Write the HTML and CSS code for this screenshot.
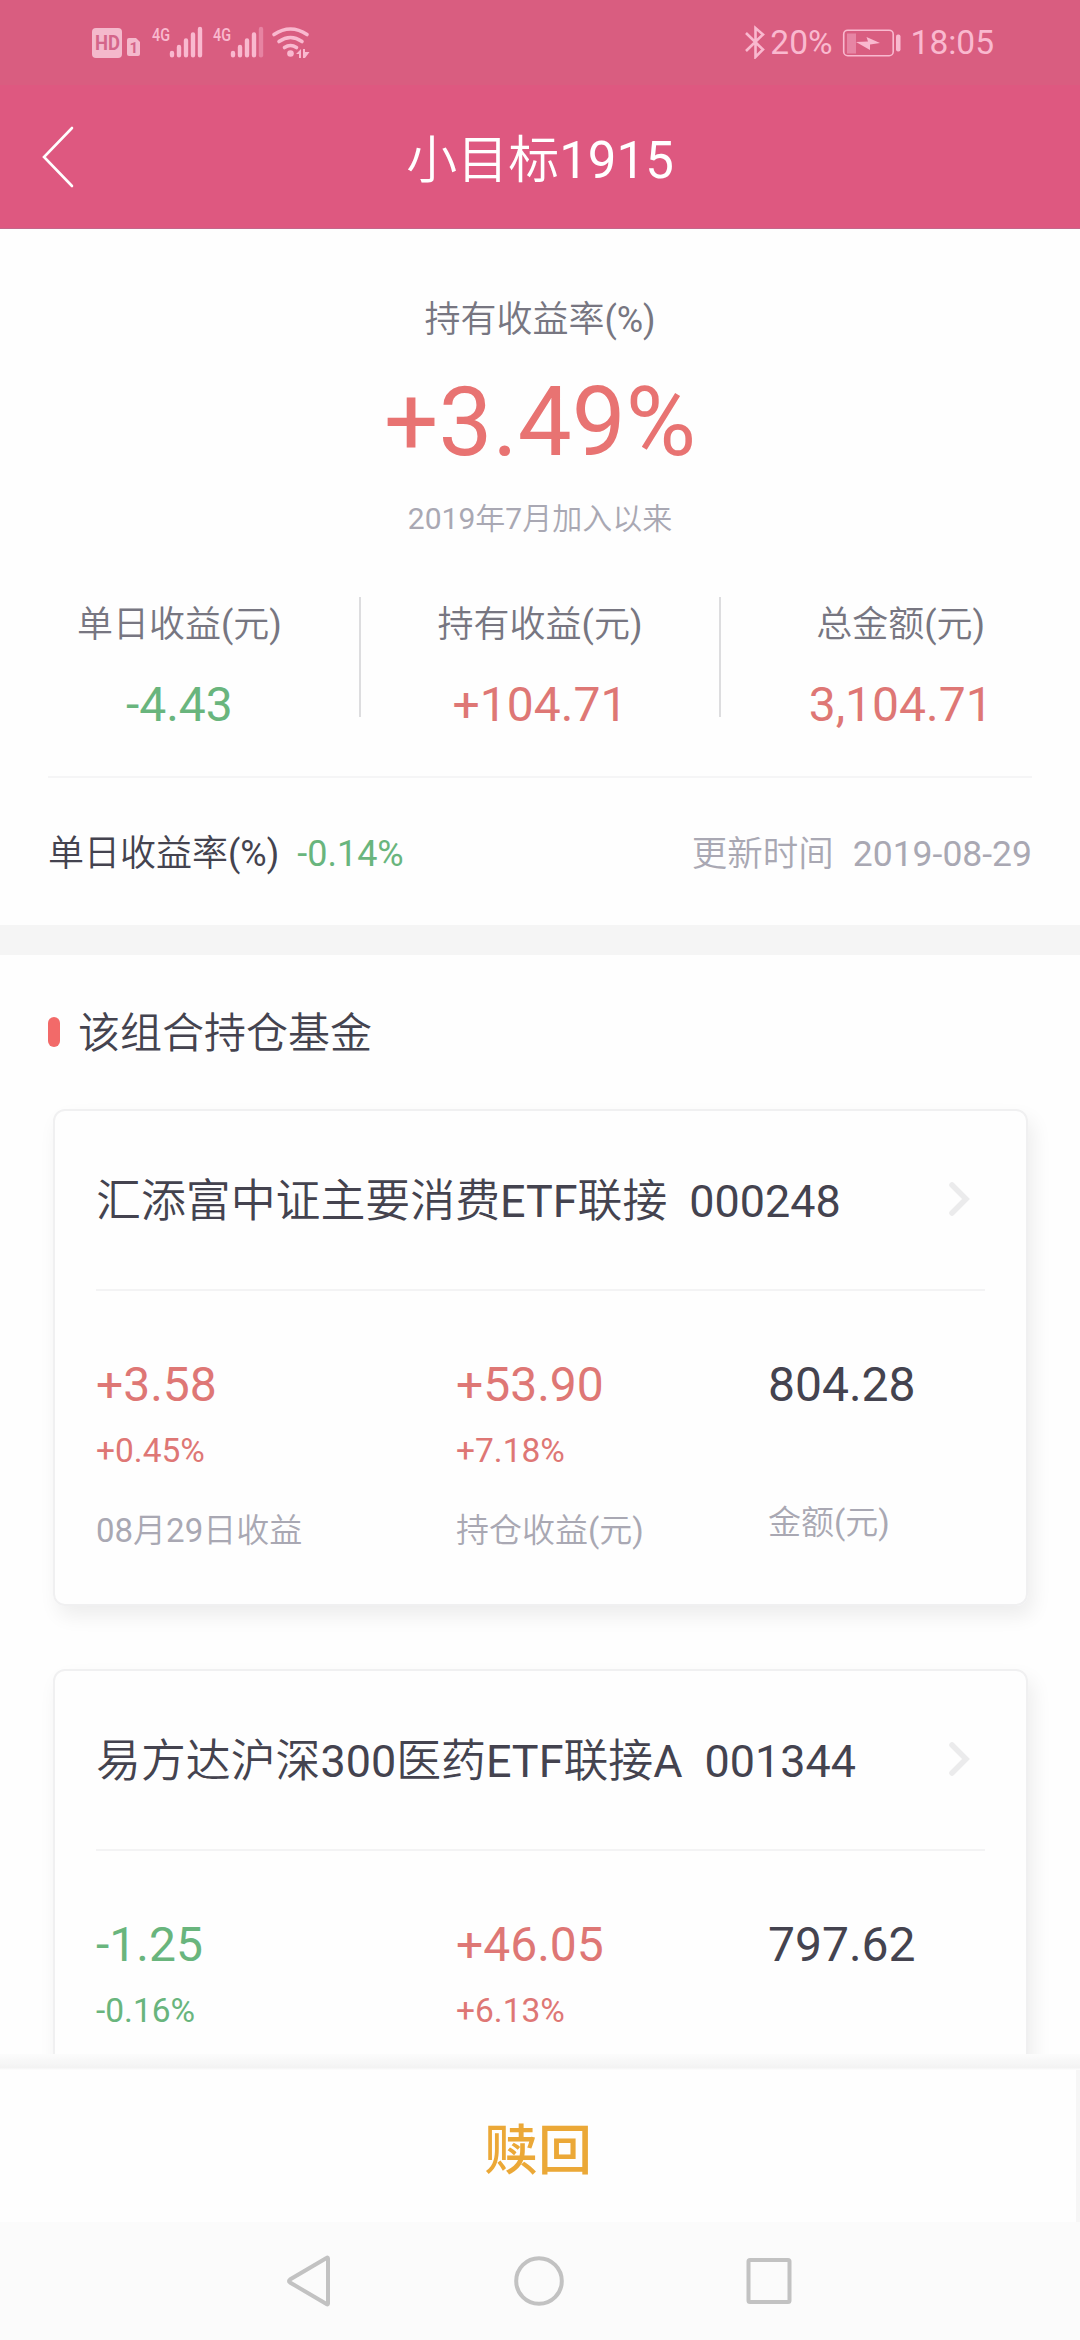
FILE: index.html
```
<!DOCTYPE html>
<html lang="zh-CN">
<head>
    <meta charset="UTF-8">
    <meta name="viewport" content="width=device-width, initial-scale=1.0">
    <title>小目标1915</title>
    <link rel="stylesheet" href="styles.css">
</head>
<body>
    <div class="status-bar">
        <svg class="status-left" width="220" height="40" viewBox="0 0 220 40">
            <!-- HD + sim -->
            <rect class="soft" x="2" y="8" width="30" height="30" rx="4"/>
            <text class="hd" x="5" y="30" textLength="25" lengthAdjust="spacingAndGlyphs">HD</text>
            <path class="soft" d="M39 18h7l4 4v12a2 2 0 0 1-2 2h-9a2 2 0 0 1-2-2V20a2 2 0 0 1 2-2z"/>
            <text class="sim" x="39.500" y="33" textLength="7">1</text>
            <!-- signal 1 -->
            <text class="net" x="62" y="20.500" textLength="18" lengthAdjust="spacingAndGlyphs">4G</text>
            <path class="bars" d="M82 33v2.200M89 27v8.200M96 20.500v14.700M103 14.500v20.700M110 9v26.200"/>
            <!-- signal 2 -->
            <text class="net" x="123" y="20.500" textLength="18" lengthAdjust="spacingAndGlyphs">4G</text>
            <path class="bars" d="M143 33v2.200M150 27v8.200M157 20.500v14.700M164 14.500v20.700"/>
            <path class="bars dim" d="M171 9v26.200"/>
            <!-- wifi -->
            <path class="wifi" d="M184 14.500q16.500-11 33 0M189 21.500q11.500-8 23 0M194.500 27.500q6-4 12 0"/>
            <circle class="fill" cx="200.500" cy="33.500" r="3.300"/>
            <path class="fill" d="M206 34l5-5v9h-2v-4zM213 29h2v3h4.500l-4.500 6h-2z"/>
        </svg>
        <div class="status-right">
            <svg class="bluetooth" width="22" height="34" viewBox="0 0 22 34">
                <path d="M2 8l17 16.500-7.500 7.500V3L19 9.500 2 26"/>
            </svg>
            <span class="percent">20%</span>
            <svg class="battery" width="60" height="30" viewBox="0 0 60 30">
                <rect class="shell" x="1.700" y="2.200" width="49.500" height="25.500" rx="4"/>
                <rect class="level" x="5" y="5.500" width="9" height="20"/>
                <path class="fill" d="M14 14l12-0.500L24.500 9 38 15l-10 1.500V22z"/>
                <rect class="fill" x="54" y="6.500" width="4.500" height="17" rx="2"/>
            </svg>
            <span>18:05</span>
        </div>
    </div>

    <header class="header">
        <svg class="back" width="32" height="62" viewBox="0 0 32 62">
            <path d="M30 2L2 31l28 29"/>
        </svg>
        <h1>小目标1915</h1>
    </header>

    <main class="content">
        <section class="summary">
            <p class="rate-label">持有收益率(%)</p>
            <p class="rate">+3.49%</p>
            <p class="since">2019年7月加入以来</p>
            <div class="stats">
                <div class="stat">
                    <p class="stat-label">单日收益(元)</p>
                    <p class="stat-value down">-4.43</p>
                </div>
                <div class="stat">
                    <p class="stat-label">持有收益(元)</p>
                    <p class="stat-value up">+104.71</p>
                </div>
                <div class="stat">
                    <p class="stat-label">总金额(元)</p>
                    <p class="stat-value up">3,104.71</p>
                </div>
            </div>
            <div class="daily">
                <p>单日收益率(%)<span class="daily-rate down">-0.14%</span></p>
                <p class="updated">更新时间<span class="date">2019-08-29</span></p>
            </div>
        </section>

        <section class="funds">
            <h2>该组合持仓基金</h2>

            <div class="card">
                <div class="card-head">
                    <p>汇添富中证主要消费ETF联接<span class="code">000248</span></p>
                    <svg class="arrow" width="22" height="36" viewBox="0 0 22 36"><path d="M4 4l14 14L4 32"/></svg>
                </div>
                <div class="card-body">
                    <div class="col">
                        <p class="value up">+3.58</p>
                        <p class="pct up">+0.45%</p>
                        <p class="label">08月29日收益</p>
                    </div>
                    <div class="col">
                        <p class="value up">+53.90</p>
                        <p class="pct up">+7.18%</p>
                        <p class="label">持仓收益(元)</p>
                    </div>
                    <div class="col amount">
                        <p class="value">804.28</p>
                        <p class="label">金额(元)</p>
                    </div>
                </div>
            </div>

            <div class="card">
                <div class="card-head">
                    <p>易方达沪深300医药ETF联接A<span class="code">001344</span></p>
                    <svg class="arrow" width="22" height="36" viewBox="0 0 22 36"><path d="M4 4l14 14L4 32"/></svg>
                </div>
                <div class="card-body">
                    <div class="col">
                        <p class="value down">-1.25</p>
                        <p class="pct down">-0.16%</p>
                    </div>
                    <div class="col">
                        <p class="value up">+46.05</p>
                        <p class="pct up">+6.13%</p>
                    </div>
                    <div class="col amount">
                        <p class="value">797.62</p>
                    </div>
                </div>
            </div>
        </section>
    </main>

    <div class="bottom-shadow"></div>
    <div class="redeem">赎回</div>

    <nav class="nav-bar">
        <svg width="50" height="54" viewBox="0 0 50 54"><path d="M44 4.500v45q0 1.500-1.500 0.500L6 28.500q-2-1.500 0-3L42.500 4q1.500-1 1.500 0.500z"/></svg>
        <svg width="54" height="54" viewBox="0 0 54 54"><circle cx="27" cy="27" r="22.800"/></svg>
        <svg width="50" height="54" viewBox="0 0 50 54"><rect x="4.500" y="6" width="41" height="42" rx="1.500"/></svg>
    </nav>
</body>
</html>
```

FILE: styles.css
```
* {
    box-sizing: border-box;
}

body {
    display: flex;
    flex-direction: column;
    width: 1080px;
    height: 2340px;
    margin: 0;
    overflow: hidden;
    font-family: Roboto, "Noto Sans CJK SC DemiLight", "Noto Sans CJK SC Light", "Noto Sans CJK SC", sans-serif;
    color: #44434f;
    background-color: #fefefe;
}

h1, h2, p {
    margin: 0;
    font-weight: 400;
    white-space: nowrap;
}

svg {
    display: block;
    flex: none;
    fill: none;
}

.up {
    color: #de7775;
}

.down {
    color: #69b57d;
}

/* status bar */
.status-bar {
    display: flex;
    justify-content: space-between;
    flex: none;
    height: 85px;
    padding: 20px 86px 0 90px;
    background-color: #d95d80;
    color: #f9b9cf;
    font-size: 33.5px;
    line-height: 46px;
}

.status-right {
    display: flex;
}

.soft {
    fill: #f4b9cc;
}

.fill {
    fill: #f9b9cf;
}

.hd, .sim {
    fill: #d4658a;
    font-size: 20px;
    font-weight: 700;
}

.sim {
    font-size: 15px;
}

.net {
    fill: #f9b9cf;
    font-size: 19px;
    font-weight: 500;
}

.bars {
    stroke: #f9b9cf;
    stroke-width: 4.4;
    stroke-linecap: round;
}

.dim {
    stroke: #e783a2;
}

.wifi {
    stroke: #f9b9cf;
    stroke-width: 3.6;
    stroke-linecap: round;
}

.bluetooth {
    margin: 5px 4px 0 0;
    stroke: #f9b9cf;
    stroke-width: 2.6;
}

.battery {
    margin: 8px 9px 0 9px;
}

.shell {
    stroke: #f9b9cf;
    stroke-width: 1.6;
}

.level {
    fill: #e785a4;
}

/* header */
.header {
    display: flex;
    align-items: center;
    flex: none;
    height: 144px;
    padding: 0 42px;
    border-bottom: 1px solid #c4668a;
    background-color: #de5880;
    color: #fff;
}

.back {
    stroke: #fff;
    stroke-width: 2.6;
    stroke-linecap: round;
}

h1 {
    flex: 1;
    padding: 8px 32px 0 0;
    font-size: 51px;
    line-height: 70px;
    text-align: center;
}

/* summary */
.content {
    flex: none;
    height: 1825px;
    overflow: hidden;
}

.summary {
    height: 726px;
    padding: 66px 0 0;
    border-bottom: 30px solid #f5f5f5;
    text-align: center;
}

.rate-label {
    color: #777681;
    font-size: 36px;
    line-height: 50px;
}

.rate {
    margin-top: 22px;
    color: #e87372;
    font-size: 96px;
    line-height: 110px;
}

.since {
    margin-top: 22px;
    color: #a9a8b3;
    font-size: 30px;
    line-height: 40px;
}

.stats {
    display: flex;
    margin-top: 58px;
}

.stat {
    flex: 1;
    height: 120px;
    border-right: 2px solid #dddddf;
}

.stat:last-child {
    border-right: 0;
}

.stat-label {
    margin-top: 3px;
    color: #777681;
    font-size: 36px;
    line-height: 50px;
}

.stat-value {
    margin-top: 25px;
    font-size: 48px;
    line-height: 60px;
}

.daily {
    display: flex;
    justify-content: space-between;
    margin: 59px 48px 0;
    padding-top: 51px;
    border-top: 2px solid #f5f5f6;
    font-size: 36px;
    line-height: 50px;
}

.daily-rate {
    margin-left: 18px;
}

.updated {
    color: #a9a8b3;
    font-size: 35.5px;
}

.date {
    margin-left: 19px;
}

/* fund list */
.funds {
    padding: 50px 52px 0 53px;
}

h2 {
    display: flex;
    align-items: center;
    margin: 0 0 48px -5px;
    padding-top: 2px;
    font-size: 42px;
    line-height: 54px;
}

h2::before {
    content: "";
    width: 12px;
    height: 30px;
    margin: -4px 18px 0 0;
    border-radius: 6px;
    background-color: #f26a69;
}

.card {
    height: 497px;
    margin-bottom: 63px;
    padding: 0 41px;
    border: 2px solid #f0f0f1;
    border-radius: 12px;
    box-shadow: 5px 10px 20px rgba(0, 0, 0, 0.07);
}

.card-head {
    display: flex;
    justify-content: space-between;
    height: 180px;
    padding: 61px 15px 0 0;
    border-bottom: 2px solid #f3f3f4;
    font-size: 44.9px;
    line-height: 60px;
}

.code {
    margin-left: 22px;
}

.arrow {
    margin-top: 9px;
    stroke: #ebebec;
    stroke-width: 5.5;
    stroke-linecap: round;
}

.card-body {
    display: flex;
    padding-top: 64px;
}

.col {
    flex: none;
    width: 360px;
}

.col:nth-child(2) {
    width: 312px;
}

.col.amount {
    flex: 1;
}

.value {
    font-size: 48px;
    line-height: 60px;
}

.pct {
    margin-top: 16px;
    font-size: 33.5px;
    line-height: 40px;
}

.label {
    margin-top: 40px;
    color: #a9a8b3;
    font-size: 33px;
    line-height: 40px;
}

.amount .label {
    margin-top: 88px;
}

/* redeem button */
.bottom-shadow {
    flex: none;
    height: 16px;
    background: linear-gradient(#fcfcfc, #f3f3f3 85%, #fdfdfd);
}

.redeem {
    flex: none;
    height: 152px;
    padding-top: 47px;
    border-right: 4px solid #f6f6f6;
    color: #eba837;
    font-family: Roboto, "Noto Sans CJK SC", sans-serif;
    font-size: 54px;
    font-weight: 500;
    line-height: 70px;
    text-align: center;
}

/* android navigation */
.nav-bar {
    display: flex;
    justify-content: space-between;
    flex: 1;
    padding: 32px 286px 0 284px;
    background-color: #fbfbfb;
    stroke: #c2c2c2;
    stroke-width: 4;
}
```
